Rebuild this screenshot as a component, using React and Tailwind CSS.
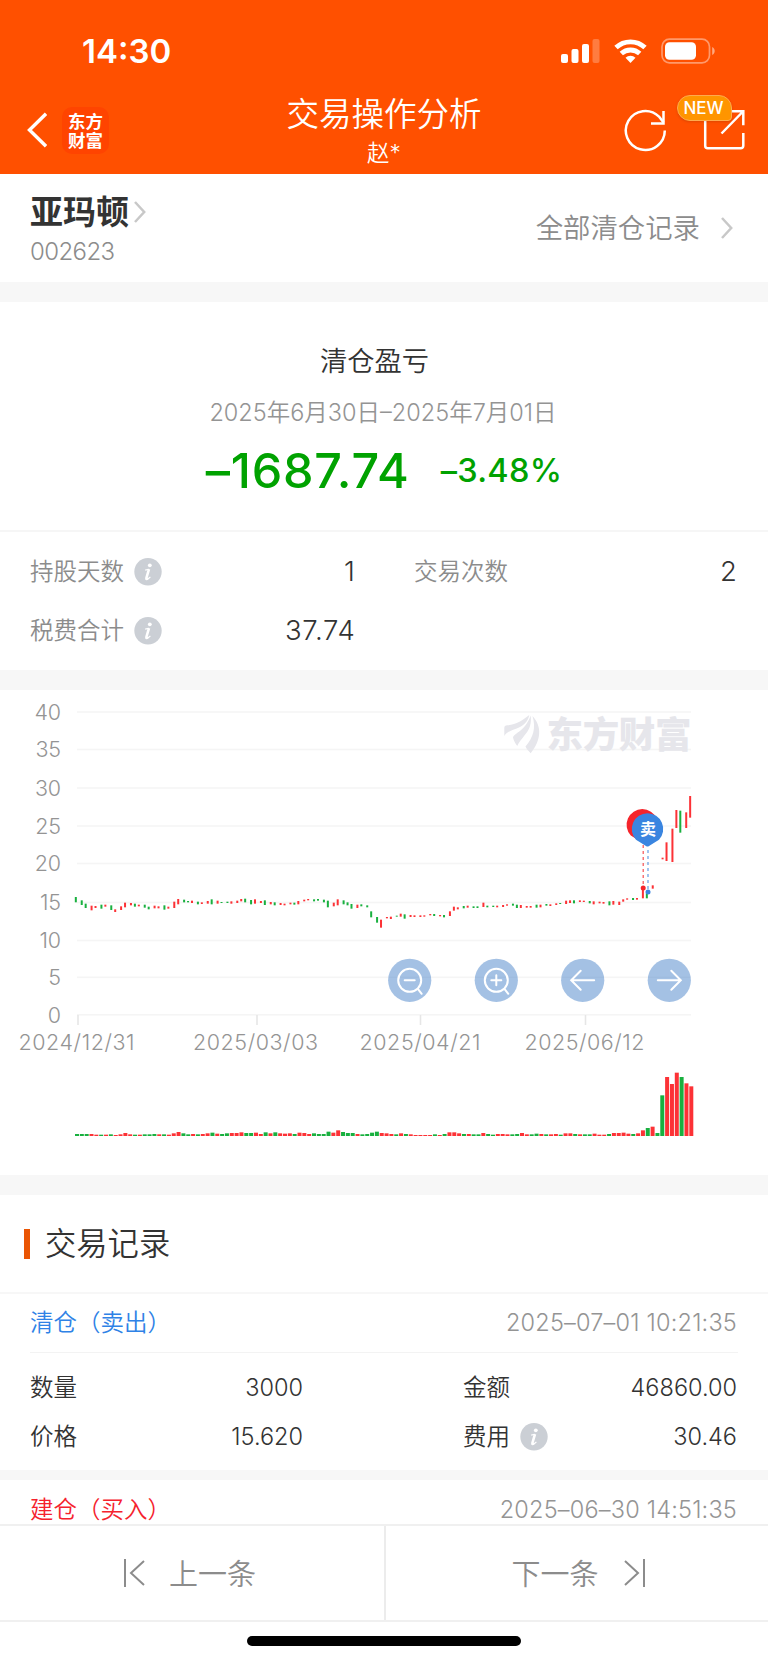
import React from 'react';

// [direction, top, bottom] for every trading day, in thirds of a pixel below y = 195 of the chart
const candles = [
  ['g', 36, 52], ['g', 46, 60], ['g', 56, 69], ['r', 62, 76], ['r', 63, 69], ['g', 59, 71], ['r', 59, 65], ['g', 61, 75],
  ['r', 73, 81], ['r', 64, 75], ['r', 53, 67], ['r', 54, 61], ['g', 56, 65], ['r', 59, 64], ['g', 59, 68], ['g', 65, 73],
  ['r', 62, 70], ['r', 64, 70], ['g', 61, 74], ['r', 65, 71], ['r', 50, 69], ['r', 42, 58], ['g', 44, 52], ['g', 48, 52],
  ['r', 47, 54], ['g', 50, 58], ['r', 52, 57], ['r', 48, 56], ['g', 43, 58], ['r', 47, 56], ['g', 51, 54], ['g', 50, 54],
  ['r', 49, 56], ['r', 47, 54], ['r', 42, 49], ['g', 41, 52], ['g', 45, 58], ['r', 43, 56], ['r', 48, 54], ['g', 46, 60],
  ['r', 51, 58], ['g', 52, 61], ['r', 54, 60], ['r', 56, 61], ['r', 53, 58], ['g', 53, 59], ['r', 48, 58], ['r', 44, 49],
  ['r', 42, 46], ['g', 43, 49], ['g', 42, 47], ['g', 44, 52], ['g', 47, 67], ['r', 53, 64], ['r', 43, 61], ['g', 46, 58],
  ['g', 52, 61], ['g', 57, 71], ['r', 59, 69], ['g', 58, 64], ['g', 61, 67], ['g', 79, 97], ['g', 96, 113], ['r', 104, 128],
  ['r', 96, 100], ['r', 95, 102], ['g', 92, 95], ['r', 86, 95], ['g', 88, 101], ['r', 90, 96], ['r', 91, 96], ['r', 91, 96],
  ['r', 91, 95], ['r', 87, 91], ['g', 87, 93], ['r', 90, 94], ['g', 90, 97], ['r', 79, 93], ['r', 65, 77], ['r', 67, 73],
  ['g', 63, 70], ['r', 62, 68], ['g', 64, 69], ['g', 64, 69], ['r', 53, 66], ['g', 62, 67], ['g', 62, 66], ['r', 62, 67],
  ['r', 60, 66], ['r', 58, 62], ['g', 56, 62], ['g', 59, 69], ['r', 60, 69], ['r', 63, 68], ['r', 63, 68], ['g', 59, 68],
  ['r', 59, 67], ['g', 57, 62], ['r', 58, 63], ['r', 55, 60], ['g', 54, 57], ['r', 47, 57], ['r', 46, 54], ['g', 46, 55],
  ['r', 46, 51], ['r', 47, 51], ['g', 48, 55], ['r', 49, 58], ['r', 50, 55], ['r', 51, 56], ['g', 49, 61], ['r', 48, 59],
  ['r', 50, 60], ['r', 43, 50], ['r', 40, 44], ['g', 39, 45], ['r', 39, 44], ['r', 10, 40], ['g', 25, 40], ['r', 1, 11],
  null, ['r', -82, -77], ['r', -128, -72], ['r', -169, -69], ['r', -225, -171], ['g', -223, -157], ['r', -218, -171], ['r', -267, -202],
];

const volumes =
  'g6 g6 g6 r6 r4 g4 r4 g5 r3 r5 r9 r5 g4 r4 g5 g5 g6 r5 g5 r4 r8 r12 g8 g5 r6 g5 r6 r8 g10 r7 g6 g8 r9 r9 r11 g9 g9 r10 r6 g11 r8 g11 r8 r7 r8 g6 r10 r9 r6 g8 g6 g6 g13 r10 r17 g12 g9 g9 r6 g5 g6 g10 g13 r9 r8 r6 g5 r8 g6 r5 r3 r3 r3 r3 g5 r3 g6 r11 r11 r8 g6 r6 g5 g5 r9 g6 g4 r6 r6 r5 g5 g6 r9 r5 g5 g7 r6 g5 r5 r6 g4 r8 r8 g6 r5 g5 g5 r7 r4 r4 g6 r9 r9 r10 r7 g6 r8 r17 g24 r28 g9 g122 r177 r156 r190 g177 r158 r149'
    .split(' ')
    .map((v) => [v[0], Number(v.slice(1)) / 3]);

const fills = { r: '#fc3236', g: '#19b03f' };

// candles sit on a 390 point wide grid
const candleX = (i) => Math.ceil(38 + i * 2.4556) * 1.969;

const yAxis = [
  [40, 22], [35, 59.5], [30, 98], [25, 136], [20, 173.5], [15, 212.5], [10, 250.5], [5, 287.3], [0, 324.8],
];

const xAxis = [
  ['2024/12/31', 76.5, 78, 116],
  ['2025/03/03', 255.5, 257, 125],
  ['2025/04/21', 420, 420.5, 121],
  ['2025/06/12', 584.5, 585.5, 120],
];

const InfoIcon = () => (
  <svg className="ml-[10px] h-7 w-7 shrink-0" viewBox="0 0 28 28">
    <circle cx="14" cy="13.7" r="13.7" fill="#cbcfd5" />
    <circle cx="15.8" cy="7.3" r="1.9" fill="#fff" />
    <path d="M15 11.2l-2.6 8.800q-.4 1.600 1.600.4" fill="none" stroke="#fff" strokeWidth="2.6" />
    <path d="M11.2 12.100l3.800-.9M12.600 20.800q2 .2 3.800-2" fill="none" stroke="#fff" strokeWidth="1.1" />
  </svg>
);

const Chevron = () => (
  <svg className="h-[22px] w-3 shrink-0" viewBox="0 0 12 22" fill="none" stroke="#c8c8c8" strokeWidth="2.5">
    <path d="M1 1l9.2 10L1 21" />
  </svg>
);

const StatusBar = () => (
  <div className="flex h-[102px] items-center justify-between pl-[82px] pr-[52px]">
    <span className="text-[33px] font-semibold leading-10">14:30</span>
    <div className="flex items-center">
      <svg className="h-6 w-[39px]" viewBox="0 0 39 24" fill="#fff">
        <rect x="0" y="15" width="7" height="9" rx="2" />
        <rect x="10.5" y="10" width="7" height="14" rx="2" />
        <rect x="21" y="5" width="7" height="19" rx="2" />
        <rect x="31.5" y="0" width="7" height="24" rx="2" opacity="0.25" />
      </svg>
      <svg className="ml-[14px] h-6 w-[33px]" viewBox="0 0 33 24" fill="none" stroke="#fff" strokeWidth="4.8">
        <path d="M2 8.6a21 21 0 0 1 29 0" />
        <path d="M7.3 14.6a13.5 13.5 0 0 1 18.4 0" />
        <path d="M16.5 24l-5-5.2a7.3 7.3 0 0 1 10 0z" fill="#fff" stroke="none" />
      </svg>
      <svg className="ml-[14px] h-[26px] w-[55px]" viewBox="0 0 55 26">
        <rect x="1" y="1.2" width="47.5" height="23.6" rx="7.5" fill="none" stroke="#fff" strokeOpacity="0.42" strokeWidth="1.7" />
        <rect x="4" y="4.2" width="31" height="17.6" rx="4.5" fill="#fff" />
        <path d="M51.2 9c3.3 1.4 3.3 6.6 0 8z" fill="#fff" opacity="0.5" />
      </svg>
    </div>
  </div>
);

const NavBar = () => (
  <div className="grid h-[71px] grid-cols-3">
    <div className="flex items-start pl-[27px] pt-[5px]">
      <svg className="mt-[5px] h-[36px] w-[20px]" viewBox="0 0 20 36" fill="none" stroke="#fff" strokeWidth="3.4">
        <path d="M19 1.8L2.5 18 19 34.2" />
      </svg>
      <div className="ml-[15px] flex h-[47px] w-[47px] flex-col items-center justify-center rounded-[10px] bg-[#ff4400] text-[17.5px] font-bold leading-[19px]">
        <span>东方</span>
        <span>财富</span>
      </div>
    </div>
    <div className="flex flex-col items-center">
      <span className="mt-[-7px] whitespace-nowrap text-[32.5px] leading-[40px]">交易操作分析</span>
      <span className="mt-[4px] text-[22.5px] leading-[28px]">赵*</span>
    </div>
    <div className="flex items-start justify-end pr-[23px]">
      <svg className="mt-[7px] h-[43px] w-[43px]" viewBox="0 0 43 43" fill="none" stroke="#fff" strokeWidth="2.5">
        <path d="M40.8 21.5A19.5 19.5 0 1 1 35 7.6l4.5 6" />
        <path d="M39.5 2v12.6H27" />
      </svg>
      <div className="relative ml-[36px] mt-[7px]">
        <svg className="h-[42px] w-[42px]" viewBox="0 0 42 42" fill="none" stroke="#fff" strokeWidth="2.5">
          <path d="M2.2 10v26.8a2.5 2.5 0 0 0 2.5 2.5h33.1a2.5 2.5 0 0 0 2.5-2.5V24" />
          <path d="M27 2.2h13.3v14M40 2.5L18.5 24.500" />
        </svg>
        <span className="absolute -left-[26px] -top-[14px] flex h-[26px] w-[55px] items-center justify-center rounded-[13px] rounded-br-[4px] border border-[#ffab4d] bg-[#ff9500] pr-[2px] text-[17px] font-medium leading-none shadow-sm">
          NEW
        </span>
      </div>
    </div>
  </div>
);

const Pin = ({ x, y, color }) => (
  <path
    d={`M${x} ${y - 15.7}a15.7 15.7 0 0 1 11.5 26.4L${x + 1.5} ${y + 17}q-1.5 1-3 0L${x - 11.5} ${y + 10.7}A15.7 15.7 0 0 1 ${x} ${y - 15.7}z`}
    fill={color}
  />
);

const ChartButton = ({ x, children }) => (
  <g transform={`translate(${x} 290.3)`} fill="none" stroke="#fff" strokeWidth="2" strokeLinecap="round">
    <circle r="21.6" fill="#4983c9" fillOpacity="0.5" stroke="none" />
    {children}
  </g>
);

const PriceChart = () => (
  <svg className="block h-[486px] w-[768px]" viewBox="0 0 768 486">
    {yAxis.map(([label, y]) => (
      <g key={label}>
        <rect x="77" y={y - 0.8} width="614" height="1.6" fill="#f5f5f5" />
        <text x="60.8" y={y + 7.8} textAnchor="end" fontSize="21.5" letterSpacing="-0.2" fill="#949494">{label}</text>
      </g>
    ))}
    {xAxis.map(([label, x, tick, width]) => (
      <g key={label}>
        <rect x={tick - 0.8} y="325" width="1.6" height="10" fill="#e6e6e6" />
        <text x={x - width / 2} y="360" textLength={width} fontSize="21.5" fill="#949494">{label}</text>
      </g>
    ))}

    {/* Watermark */}
    <g fill="#e6e6eb">
      <path d="M504.300 46V38q0-2.500 3-2.700C516 35 523 30 529.300 25 528 31 524.500 35 519 37.500 513 40 507.500 41 504.300 46z" />
      <path d="M513 47.500C514.500 42.500 525 41.500 530.700 25.500 532.500 42 522.500 45 517.300 56 515.500 54 513.800 51 513 47.500z" />
      <path d="M532.500 26C542 36 541.500 50 530.700 63.300 528.500 61 526.500 59 525.500 56.500 533.500 47 536 38 532.500 26z" />
      <text x="546.5" y="58" fontSize="36.5" fontWeight="900" textLength="145">东方财富</text>
    </g>

    {candles.map((c, i) => c && (
      <rect key={i} x={candleX(i)} y={195 + c[1] / 3} width="2" height={(c[2] - c[1]) / 3} fill={fills[c[0]]} />
    ))}
    {volumes.map(([dir, h], i) => (
      <rect key={i} x={75 + i * 4.837} y={446 - h} width="4" height={h} fill={fills[dir]} />
    ))}

    {/* Buy and sell markers */}
    <path d="M643.2 155v40" stroke="#f5252b" strokeOpacity="0.8" strokeWidth="1.2" strokeDasharray="3 3" />
    <path d="M648 160v40" stroke="#3a85e0" strokeOpacity="0.6" strokeWidth="1.6" strokeDasharray="3 3" />
    <circle cx="643.2" cy="198" r="2.5" fill="#f5252b" />
    <circle cx="648" cy="202" r="2.5" fill="#3a85e0" />
    <Pin x={642.3} y={134.8} color="#f5252b" />
    <Pin x={647.5} y={139} color="#3a85e0" />
    <text x="648" y="145" textAnchor="middle" fontSize="16" fontWeight="700" fill="#fff">卖</text>

    <ChartButton x={409.7}>
      <circle r="11.5" />
      <path d="M-5 0H5M8.5 9l3.5 4.5" />
    </ChartButton>
    <ChartButton x={496.3}>
      <circle r="11.5" />
      <path d="M-5 0H5M0-5V5M8.5 9l3.5 4.5" />
    </ChartButton>
    <ChartButton x={582.7}>
      <path d="M11.5 0H-11M-2-9.5L-11.5 0-2 9.5" />
    </ChartButton>
    <ChartButton x={669.3}>
      <path d="M-11.5 0H11M2-9.5L11.5 0 2 9.5" />
    </ChartButton>
  </svg>
);

const Stat = ({ label, value, info }) => (
  <div className="flex h-[59px] items-center">
    <span className="text-[23.5px] text-[#8c8c8c]">{label}</span>
    {info && <InfoIcon />}
    <span className="-mr-[1.5px] ml-auto text-[27.5px] tracking-[0.7px]">{value}</span>
  </div>
);

const Field = ({ label, value, info }) => (
  <div className="flex h-[49px] items-center">
    <span>{label}</span>
    {info && <InfoIcon />}
    <span className="ml-auto">{value}</span>
  </div>
);

export default function App() {
  return (
    <div className="flex h-[1663px] w-[768px] flex-col overflow-hidden bg-white font-['Inter','Noto_Sans_CJK_SC',sans-serif] font-[350] text-[#333]">
      <header className="h-[173.5px] shrink-0 bg-[#ff5000] text-white">
        <StatusBar />
        <NavBar />
      </header>

      <section className="flex h-[108.5px] shrink-0 items-center justify-between pl-[30px] pr-[35px]">
        <div className="flex flex-col pt-[3px]">
          <div className="flex h-[42px] items-center">
            <span className="text-[33px] font-bold leading-[42px]">亚玛顿</span>
            <span className="ml-[5px]"><Chevron /></span>
          </div>
          <span className="mt-[4px] text-[24px] leading-[30px] tracking-[-0.6px] text-[#8c8c8c]">002623</span>
        </div>
        <div className="flex items-center">
          <span className="mr-[21px] text-[27.4px] leading-[36px] text-[#8c8c8c]">全部清仓记录</span>
          <Chevron />
        </div>
      </section>

      <div className="h-5 shrink-0 bg-[#f7f7f7]" />

      <section className="h-[368px] shrink-0">
        <div className="flex h-[230px] flex-col items-center border-b-2 border-[#f6f6f6] pt-[40px]">
          <h2 className="pr-[19px] text-[27.3px] leading-[40px]">清仓盈亏</h2>
          <p className="mt-[15px] pr-[2px] text-[23.5px] leading-[32px] text-[#949494]">2025年6月30日–2025年7月01日</p>
          <div className="mt-[11px] flex items-center text-[#00a200]">
            <span className="text-[48.5px] font-medium leading-[62px] tracking-[0.8px]">–1687.74</span>
            <span className="ml-[31px] text-[32.5px] font-medium leading-[62px] tracking-[0.3px]">–3.48%</span>
          </div>
        </div>
        <div className="grid grid-cols-[324px_322px] gap-x-[60px] px-[30px] pt-[10px]">
          <Stat label="持股天数" value="1" info />
          <Stat label="交易次数" value="2" />
          <Stat label="税费合计" value="37.74" info />
        </div>
      </section>

      <div className="h-5 shrink-0 bg-[#f7f7f7]" />

      <section className="h-[485px] shrink-0 overflow-hidden">
        <PriceChart />
      </section>

      <div className="h-5 shrink-0 bg-[#f7f7f7]" />

      <section className="flex min-h-0 grow flex-col overflow-hidden text-[23.5px]">
        <div className="flex h-[99px] shrink-0 items-center border-b-2 border-[#f7f7f7] pl-[23.5px]">
          <span className="h-[30px] w-[6.5px] bg-[#ea5504]" />
          <h3 className="ml-[15px] pt-[2px] text-[31.3px]">交易记录</h3>
        </div>
        <div className="shrink-0 px-[30px]">
          <div className="flex h-[59px] items-center justify-between border-b-[1.5px] border-[#f3f3f3] pr-[1px]">
            <span className="text-[#2f82e6]">清仓（卖出）</span>
            <span className="tracking-[0.2px] text-[#949494]">2025–07–01 10:21:35</span>
          </div>
          <div className="grid grid-cols-[273px_274px] gap-x-[160px] pb-[9px] pt-[10px]">
            <Field label="数量" value="3000" />
            <Field label="金额" value="46860.00" />
            <Field label="价格" value="15.620" />
            <Field label="费用" value="30.46" info />
          </div>
        </div>
        <div className="h-[10px] shrink-0 bg-[#f7f7f7]" />
        <div className="flex h-[59px] shrink-0 items-center justify-between pl-[30px] pr-[31px] pt-[1px]">
          <span className="text-[#f5222d]">建仓（买入）</span>
          <span className="tracking-[0.2px] text-[#949494]">2025–06–30 14:51:35</span>
        </div>
      </section>

      <footer className="h-[139px] shrink-0 bg-white">
        <div className="grid h-[98px] grid-cols-[385.5px_1fr] border-y-2 border-[#f0f0f0] text-[29px] text-[#8c8c8c]">
          <div className="flex items-center border-r-2 border-[#ececec] pl-[123px]">
            <svg className="h-7 w-[22px]" viewBox="0 0 22 28" fill="none" stroke="#8c8c8c" strokeWidth="2">
              <path d="M2 0v28M21 2L8 14l13 12" />
            </svg>
            <span className="ml-[24px] pt-[3px]">上一条</span>
          </div>
          <div className="flex items-center pl-[126px]">
            <span className="pt-[3px]">下一条</span>
            <svg className="ml-[25px] h-7 w-[22px]" viewBox="0 0 22 28" fill="none" stroke="#8c8c8c" strokeWidth="2">
              <path d="M20 0v28M1 2l13 12L1 26" />
            </svg>
          </div>
        </div>
        <div className="mx-auto mt-[14px] h-[10px] w-[274px] rounded-full bg-black" />
      </footer>
    </div>
  );
}
